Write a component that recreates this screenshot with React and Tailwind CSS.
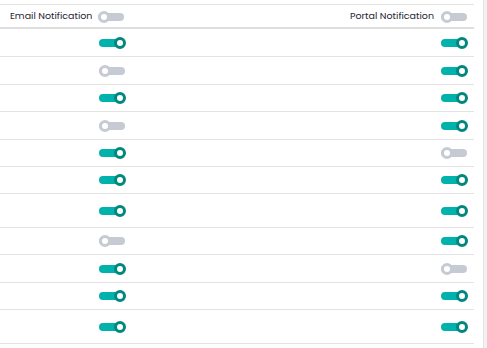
import React from 'react';

// on/off state per row: [email, portal]
const rows = [
  { email: true, portal: true, h: 'h-[28px]' },
  { email: false, portal: true, h: 'h-[28px]' },
  { email: true, portal: true, h: 'h-[27px]' },
  { email: false, portal: true, h: 'h-[28px]' },
  { email: true, portal: false, h: 'h-[27px]' },
  { email: true, portal: true, h: 'h-[27px]' },
  { email: true, portal: true, h: 'h-[34px]' },
  { email: false, portal: true, h: 'h-[27px]' },
  { email: true, portal: false, h: 'h-[28px]' },
  { email: true, portal: true, h: 'h-[27px]' },
  { email: true, portal: true, h: 'h-[34px]' },
];

const Toggle = ({ on }) => (
  <div className="relative w-[27px] h-[12px] flex items-center shrink-0">
    <div className={`w-[26px] h-[8px] rounded-full ${on ? 'bg-[#00b2ac]' : 'bg-[#c6cad3]'}`} />
    <div
      className={`absolute top-0 w-[12px] h-[12px] rounded-full bg-white border-[3.5px] ${
        on ? 'right-0 border-[#00877e]' : 'left-0 border-[#c6cad3]'
      }`}
    />
  </div>
);

export default function App() {
  return (
    <div className="flex w-[487px] h-[348px] bg-white overflow-hidden" style={{ fontFamily: 'Poppins, "Open Sans", sans-serif' }}>
      <div className="w-[474px] pt-[4px]">
        <div className="border-t border-[#e3e3e3]" />
        {/* header */}
        <div className="flex items-center justify-between h-[24px] border-b-2 border-[#dedede]">
          <div className="flex items-center gap-[6px] pl-[10px] pt-[1px]">
            <span className="text-[9.5px] text-[#1f1f33]">Email Notification</span>
            <Toggle on={false} />
          </div>
          <div className="flex items-center gap-[7px] pr-[6px] pt-[1px]">
            <span className="text-[9.5px] text-[#1f1f33]">Portal Notification</span>
            <Toggle on={false} />
          </div>
        </div>
        {rows.map((r, i) => (
          <div key={i} className={`flex items-center justify-between border-b border-[#e3e3e3] ${r.h}`}>
            <div className="w-[126px] flex justify-end">
              <Toggle on={r.email} />
            </div>
            <div className="pr-[6px]">
              <Toggle on={r.portal} />
            </div>
          </div>
        ))}
      </div>
      <div className="ml-auto w-[4px] h-full bg-[#f1f1f1] border-l border-[#e6e6e6]" />
    </div>
  );
}
